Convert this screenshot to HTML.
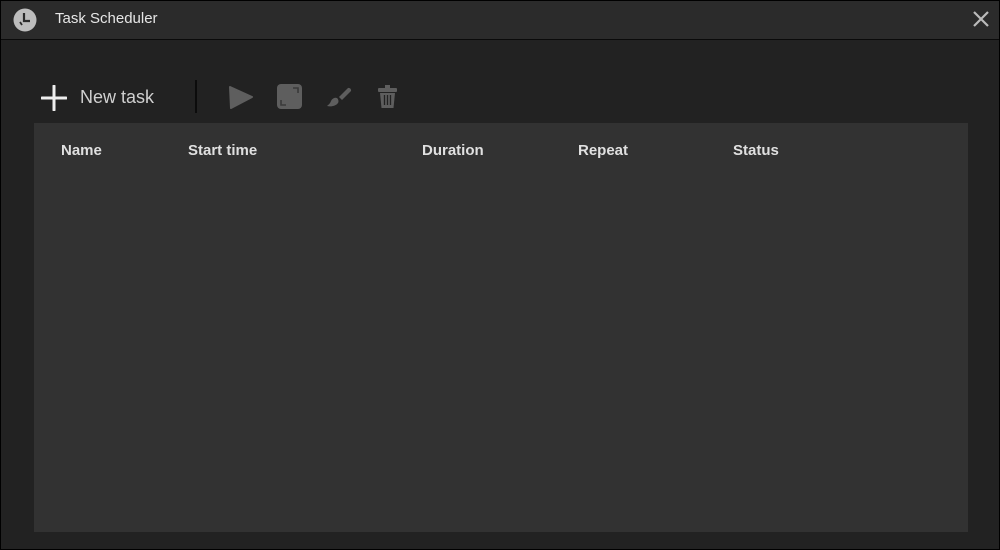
<!DOCTYPE html>
<html><head><style>
html,body{margin:0;padding:0;}
body{width:1000px;height:550px;background:#000;position:relative;overflow:hidden;font-family:"Liberation Sans",sans-serif;}
.win{position:absolute;left:1px;top:1px;width:998px;height:548px;background:#222;}
.title{position:absolute;left:0;top:0;width:998px;height:38px;background:#2b2b2b;border-bottom:1px solid #0a0a0a;}
.title span{position:absolute;left:54px;top:9px;color:#e6e6e6;font-size:15px;}
.panel{position:absolute;left:33px;top:122px;width:934px;height:409px;background:#323232;}
.th{position:absolute;top:141px;color:#e0e0e0;font-weight:bold;font-size:15px;}
</style></head><body>
<div class="win">
<div class="title">
<svg style="position:absolute;left:12px;top:7px" width="24" height="24" viewBox="0 0 24 24"><circle cx="12" cy="12" r="11.5" fill="#bdbdbd"/><path d="M11 5v8h6" stroke="#2b2b2b" stroke-width="2.2" fill="none"/><path d="M7 14l2 3" stroke="#2b2b2b" stroke-width="1.8"/></svg>
<span>Task Scheduler</span>
<svg style="position:absolute;left:971px;top:9px" width="18" height="18" viewBox="0 0 18 18"><path d="M2 2L16 16M16 2L2 16" stroke="#bbb" stroke-width="2.2"/></svg>
</div>
<svg style="position:absolute;left:40px;top:84px" width="26" height="26" viewBox="0 0 26 26"><path d="M13 1v24M1 13h24" stroke="#eee" stroke-width="3" stroke-linecap="round"/></svg>
<div style="position:absolute;left:79px;top:86px;color:#d0d0d0;font-size:18px;">New task</div>
<div style="position:absolute;left:194px;top:79px;width:2px;height:33px;background:#0c0c0c;"></div>
<svg style="position:absolute;left:228px;top:84px" width="24" height="24" viewBox="0 0 24 24"><path d="M1 2L23 12L2 23Z" fill="#5e5e5e" stroke="#5e5e5e" stroke-linejoin="round" stroke-width="2"/></svg>
<svg style="position:absolute;left:276px;top:83px" width="25" height="25" viewBox="0 0 25 25"><rect x="0" y="0" width="25" height="25" rx="4" fill="#5e5e5e"/><path d="M16 4h5v5M4 16v5h5" stroke="#3a3a3a" stroke-width="1.6" fill="none"/></svg>
<svg style="position:absolute;left:325px;top:84px" width="26" height="24" viewBox="0 0 26 24"><path d="M13 12L22 3a2.5 2.5 0 0 1 3 3L16 15Z" fill="#5e5e5e"/><path d="M11 13a5 5 0 0 0-6 3c-1 3-3 4-4 5 4 1 9 0 11-3a4 4 0 0 0-1-5Z" fill="#5e5e5e"/></svg>
<svg style="position:absolute;left:376px;top:84px" width="21" height="24" viewBox="0 0 21 24"><rect x="8" y="0" width="5" height="3" fill="#5e5e5e"/><rect x="1" y="3" width="19" height="4" rx="1" fill="#5e5e5e"/><path d="M3 8h15l-1.5 15h-12Z" fill="#5e5e5e"/><path d="M7.5 10v10M10.5 10v10M13.5 10v10" stroke="#222" stroke-width="1.3"/></svg>
<div class="panel"></div>
<div class="th" style="left:60px">Name</div>
<div class="th" style="left:187px">Start time</div>
<div class="th" style="left:421px">Duration</div>
<div class="th" style="left:577px">Repeat</div>
<div class="th" style="left:732px">Status</div>
</div>
</body></html>
